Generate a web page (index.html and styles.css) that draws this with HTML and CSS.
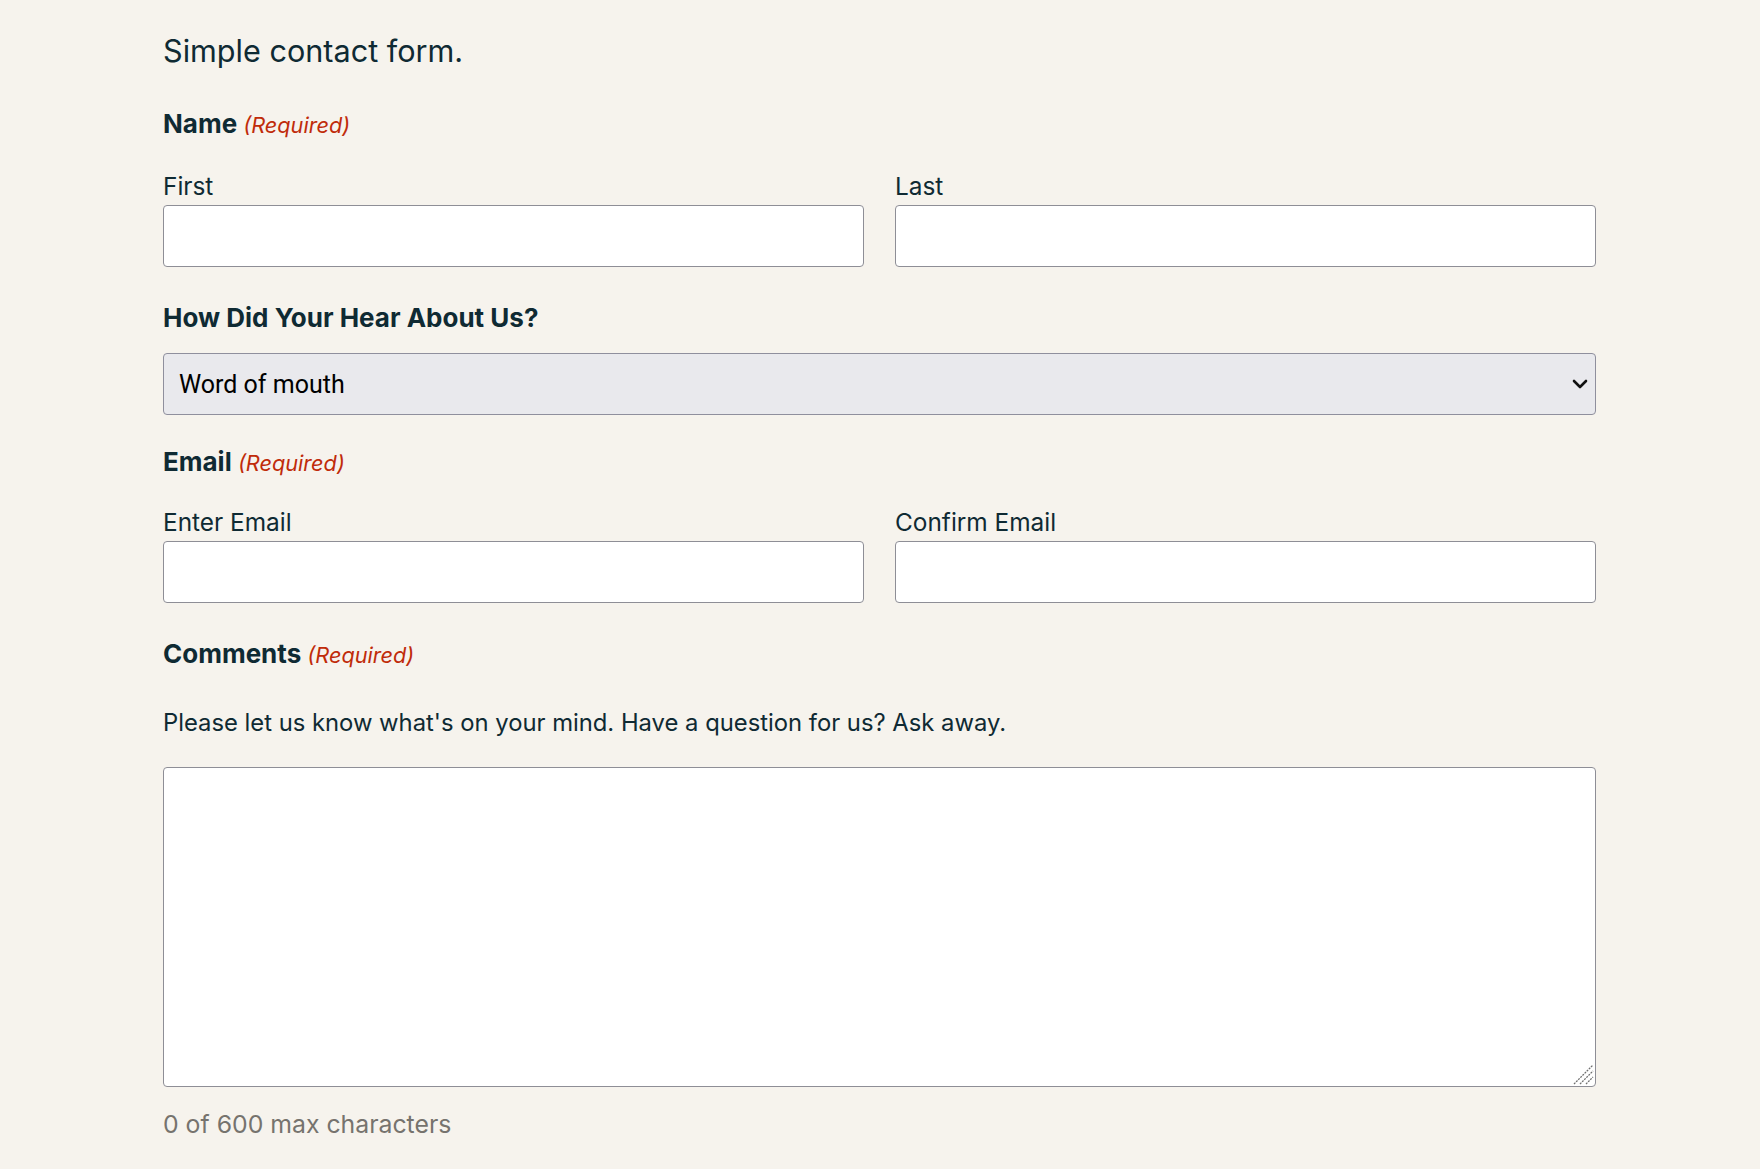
FILE: index.html
```html
<!DOCTYPE html>
<html lang="en">
<head>
<meta charset="utf-8">
<title>Simple contact form</title>
<link rel="stylesheet" href="styles.css">
</head>
<body>
<main class="page">
  <p class="intro">Simple contact form.</p>
  <form class="form">
    <div class="field field-name" role="group" aria-labelledby="name-legend">
      <div class="legend" id="name-legend">Name <span class="req">(Required)</span></div>
      <div class="cols">
        <div class="sub">
          <label class="sublabel" for="first">First</label>
          <input class="input" id="first" type="text">
        </div>
        <div class="sub">
          <label class="sublabel" for="last">Last</label>
          <input class="input" id="last" type="text">
        </div>
      </div>
    </div>

    <div class="field field-select">
      <label class="legend" for="hear">How Did Your Hear About Us?</label>
      <div class="select-wrap">
        <select class="select" id="hear">
          <option>Word of mouth</option>
          <option>Search engine</option>
          <option>Social media</option>
          <option>Other</option>
        </select>
        <svg class="chevron" width="16" height="10" viewBox="0 0 16 10" aria-hidden="true"><path d="M2 2 L8 8 L14 2" fill="none" stroke="#111" stroke-width="2.6" stroke-linecap="round" stroke-linejoin="round"/></svg>
      </div>
    </div>

    <div class="field field-email" role="group" aria-labelledby="email-legend">
      <div class="legend" id="email-legend">Email <span class="req">(Required)</span></div>
      <div class="cols">
        <div class="sub">
          <label class="sublabel" for="email">Enter Email</label>
          <input class="input" id="email" type="email">
        </div>
        <div class="sub">
          <label class="sublabel" for="email2">Confirm Email</label>
          <input class="input" id="email2" type="email">
        </div>
      </div>
    </div>

    <div class="field field-comments">
      <label class="legend" for="comments">Comments <span class="req">(Required)</span></label>
      <p class="desc">Please let us know what's on your mind. Have a question for us? Ask away.</p>
      <div class="textarea-wrap">
        <textarea class="textarea" id="comments"></textarea>
        <svg class="grip" width="22" height="22" viewBox="0 0 22 22" aria-hidden="true">
          <path d="M2 21 L21 2 M8 21 L21 8 M14 21 L21 14" stroke="#6f6f6f" stroke-width="1.3" stroke-dasharray="2 1" fill="none"/>
        </svg>
      </div>
      <p class="counter">0 of 600 max characters</p>
    </div>
  </form>
</main>
</body>
</html>
```

FILE: styles.css
```css
html, body {
  margin: 0;
  padding: 0;
  background: #f6f3ed;
}

body {
  font-family: "Inter", "Lato", "Noto Sans", sans-serif;
  color: #0f2a33;
}

.page {
  width: 1433px;
  padding: 31px 0 0 163px;
}

.intro {
  margin: 0;
  font-size: 30.6px;
  line-height: 40px;
}

.form {
  margin: 0;
}

.field {
  margin: 0;
  padding: 0;
}

.legend {
  display: block;
  font-size: 26px;
  line-height: 32px;
  font-weight: 700;
}

.req {
  font-weight: 400;
  font-style: italic;
  color: #c02b0a;
  font-size: 21.7px;
  line-height: 1;
  margin-left: 0;
}

.field-name {
  margin-top: 37px;
}

.cols {
  display: grid;
  grid-template-columns: 1fr 1fr;
  column-gap: 31px;
  margin-top: 30px;
}

.field-email .cols {
  margin-top: 28px;
}

.sub {
  display: flex;
  flex-direction: column;
}

.sublabel {
  font-size: 24.4px;
  line-height: 32px;
  margin-bottom: 3px;
}

.input {
  box-sizing: border-box;
  height: 62px;
  width: 100%;
  margin: 0;
  background: #fff;
  border: 1px solid #8e8e96;
  border-radius: 4px;
  font: inherit;
}

.field-select {
  margin-top: 35px;
}

.select-wrap {
  position: relative;
  margin-top: 19px;
}

.select {
  display: block;
  box-sizing: border-box;
  width: 100%;
  height: 62px;
  margin: 0;
  padding: 0 40px 0 15px;
  -webkit-appearance: none;
  appearance: none;
  background: #e9e9ed;
  border: 1px solid #8f8f9d;
  border-radius: 4px;
  font-family: "Roboto", "Liberation Sans", sans-serif;
  font-size: 25px;
  color: #000;
}

.chevron {
  position: absolute;
  right: 8px;
  top: 26px;
  pointer-events: none;
}

.field-email {
  margin-top: 31px;
}

.field-comments {
  margin-top: 35px;
}

.desc {
  margin: 37px 0 0;
  font-size: 23.8px;
  line-height: 32px;
}

.textarea-wrap {
  position: relative;
  margin-top: 28px;
}

.textarea {
  display: block;
  box-sizing: border-box;
  width: 100%;
  height: 320px;
  margin: 0;
  background: #fff;
  border: 1px solid #8e8e96;
  border-radius: 4px;
  resize: none;
  font: inherit;
}

.grip {
  position: absolute;
  right: 2px;
  bottom: 2px;
  pointer-events: none;
}

.counter {
  margin: 21px 0 0;
  font-size: 24.8px;
  line-height: 32px;
  color: #76736e;
}
```
